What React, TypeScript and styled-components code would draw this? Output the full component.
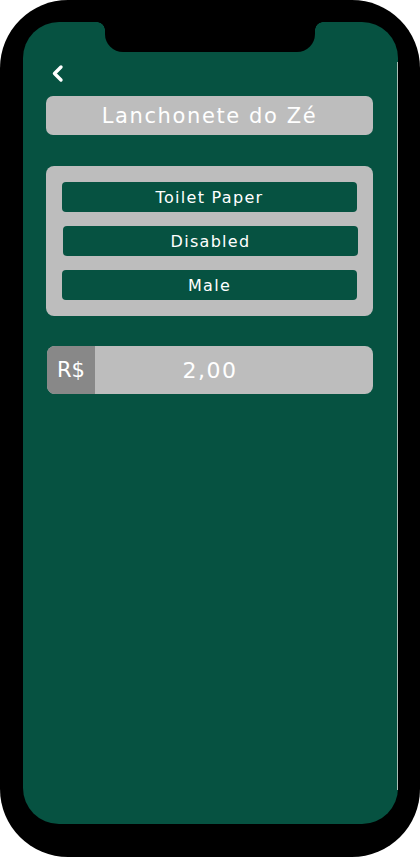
import React from "react";
import styled, { createGlobalStyle } from "styled-components";

const GREEN = "#065241";
const GRAY = "#bdbdbd";

const Global = createGlobalStyle`
  html, body { margin: 0; padding: 0; background: #ffffff; }
  body { font-family: "DejaVu Sans", "Noto Sans", sans-serif; }
`;

const Phone = styled.div`
  width: 420px;
  height: 857px;
  box-sizing: border-box;
  background: #000;
  border-radius: 68px;
  padding: 22px 22px 33px 23px;
  display: flex;
`;

const Screen = styled.div`
  position: relative;
  flex: 1;
  background: ${GREEN};
  border-radius: 36px;
  padding: 37px 25px 0 23px;
  display: flex;
  flex-direction: column;
  &::after {
    content: "";
    position: absolute;
    right: 0;
    top: 40px;
    bottom: 34px;
    width: 1px;
    background: #a9bdb5;
  }
`;

const Notch = styled.div`
  position: absolute;
  top: 0;
  left: 82px;
  width: 210px;
  height: 30px;
  background: #000;
  border-radius: 0 0 18px 18px;
  &::before,
  &::after {
    content: "";
    position: absolute;
    top: 0;
    width: 8px;
    height: 8px;
    background: radial-gradient(circle at var(--cx) 100%, transparent 7.5px, #000 8px);
  }
  &::before { left: -8px; --cx: 0%; }
  &::after { right: -8px; --cx: 100%; }
`;

const BackButton = styled.button`
  background: none;
  border: 0;
  padding: 0;
  margin: 5px 0 0 4px;
  width: 16px;
  height: 19px;
  display: flex;
  cursor: pointer;
`;

const TitleBox = styled.div`
  margin-top: 13px;
  height: 39px;
  background: ${GRAY};
  border-radius: 7px;
  display: flex;
  align-items: center;
  justify-content: center;
  color: #fff;
  font-size: 21px;
  letter-spacing: 1.6px;
`;

const OptionsCard = styled.div`
  margin-top: 31px;
  background: ${GRAY};
  border-radius: 8px;
  padding: 16px;
  display: flex;
  flex-direction: column;
  gap: 14px;
`;

const OptionButton = styled.div<{ $shift?: number }>`
  height: 30px;
  background: ${GREEN};
  border-radius: 4px;
  display: flex;
  align-items: center;
  justify-content: center;
  color: #fff;
  font-size: 16px;
  letter-spacing: 1.3px;
  transform: translateX(${(p) => p.$shift ?? 0}px);
`;

const PriceBox = styled.div`
  margin: 30px 0 0 1px;
  height: 48px;
  background: ${GRAY};
  border-radius: 8px;
  overflow: hidden;
  display: flex;
`;

const Currency = styled.div`
  width: 48px;
  background: #888888;
  color: #fff;
  display: flex;
  align-items: center;
  justify-content: center;
  font-size: 21px;
`;

const Value = styled.div`
  flex: 1;
  padding-right: 48px;
  display: flex;
  align-items: center;
  justify-content: center;
  color: #fff;
  font-size: 22px;
  letter-spacing: 1.5px;
`;

export default function App() {
  return (
    <>
      <Global />
      <Phone>
        <Screen>
          <Notch />
          <BackButton aria-label="Voltar">
            <svg width="16" height="19" viewBox="0 0 16 19">
              <path d="M11 3 L4.5 9.5 L11 16" fill="none" stroke="#fff" strokeWidth="3.4" strokeLinecap="round" strokeLinejoin="round" />
            </svg>
          </BackButton>
          <TitleBox>Lanchonete do Zé</TitleBox>
          <OptionsCard>
            <OptionButton>Toilet Paper</OptionButton>
            <OptionButton $shift={1}>Disabled</OptionButton>
            <OptionButton>Male</OptionButton>
          </OptionsCard>
          <PriceBox>
            <Currency>R$</Currency>
            <Value>2,00</Value>
          </PriceBox>
        </Screen>
      </Phone>
    </>
  );
}
